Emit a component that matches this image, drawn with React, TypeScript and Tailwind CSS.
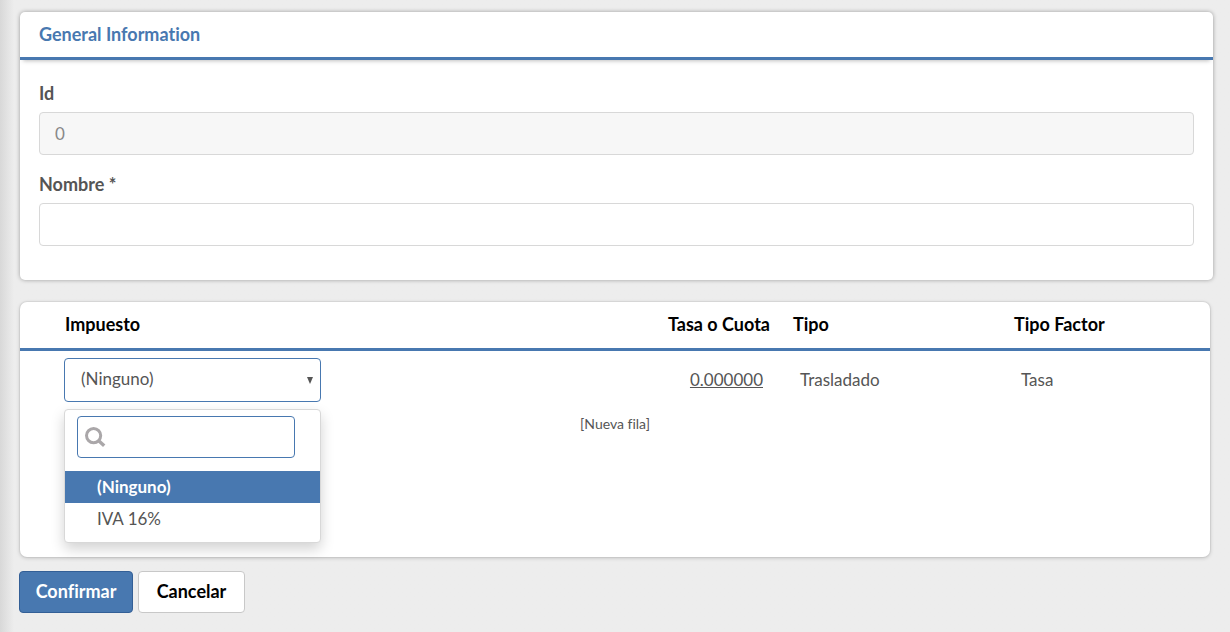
import { useState } from "react";

const options = ["(Ninguno)", "IVA 16%"];

function SearchIcon() {
  return (
    <svg
      viewBox="0 0 22 22"
      className="pointer-events-none absolute left-2 top-[10px] size-[22px]"
      fill="none"
      stroke="#aaa7a9"
      aria-hidden="true"
    >
      <circle cx="8.6" cy="9.6" r="7.1" strokeWidth="3" />
      <path d="M13.4 14.4l5.8 5.4" strokeWidth="3.4" />
    </svg>
  );
}

function GeneralInformation() {
  return (
    <section className="rounded-[5px] bg-white shadow-[0_0_4px_rgba(0,0,0,0.35)]">
      <h2 className="border-b-3 border-[#4878b0] px-[19px] pt-[10px] pb-[11px] text-lg leading-6 font-bold text-[#4878b0] shadow-[0_4px_4px_-3px_rgba(0,0,0,0.25)]">
        General Information
      </h2>
      <div className="flex flex-col gap-[17px] px-[19px] pt-[21px] pb-[34px]">
        <div className="flex flex-col gap-[7px]">
          <label htmlFor="id" className="text-lg leading-6 font-bold">
            Id
          </label>
          <input
            id="id"
            disabled
            defaultValue="0"
            className="h-[43px] w-full rounded-[4px] border border-[#d8d8d8] bg-[#f7f7f7] px-[15px] text-[17px] text-[#888]"
          />
        </div>
        <div className="flex flex-col gap-[7px]">
          <label htmlFor="nombre" className="text-lg leading-6 font-bold">
            Nombre *
          </label>
          <input
            id="nombre"
            className="h-[43px] w-full rounded-[4px] border border-[#d8d8d8] bg-white px-[15px] text-[17px] outline-none focus:border-[#4878b0]"
          />
        </div>
      </div>
    </section>
  );
}

function TaxPicker() {
  const [selected, setSelected] = useState(options[0]);
  const [query, setQuery] = useState("");
  const visible = options.filter((o) => o.toLowerCase().includes(query.toLowerCase()));

  return (
    <div className="relative w-[257px]">
      <select
        aria-label="Impuesto"
        value={selected}
        onChange={(e) => setSelected(e.target.value)}
        className="block h-11 w-full appearance-none rounded-[4px] border border-[#4878b0] bg-white px-4 pb-[2px] text-[17px] outline-none"
      >
        {options.map((o) => (
          <option key={o}>{o}</option>
        ))}
      </select>
      <svg
        viewBox="0 0 6 7"
        className="pointer-events-none absolute top-[19px] right-2 h-[7px] w-[6px]"
        fill="#555"
        aria-hidden="true"
      >
        <path d="M0 0h6L3 7z" />
      </svg>
      <div className="absolute top-full left-0 z-10 mt-[7px] w-full rounded-[4px] border border-[#d8d8d8] bg-white pt-[6px] pb-[7px] shadow-[0_6px_14px_rgba(0,0,0,0.18)]">
        <div className="relative mr-[25px] mb-[13px] ml-3">
          <input
            type="text"
            aria-label="Buscar impuesto"
            value={query}
            onChange={(e) => setQuery(e.target.value)}
            className="block h-[42px] w-full rounded-[4px] border border-[#4878b0] bg-white pr-3 pl-9 text-[17px] outline-none"
          />
          <SearchIcon />
        </div>
        <ul role="listbox" aria-label="Impuesto">
          {visible.map((o) => (
            <li
              key={o}
              role="option"
              aria-selected={o === selected}
              onClick={() => setSelected(o)}
              className="cursor-pointer px-8 text-[17px] leading-8 aria-selected:bg-[#4878b0] aria-selected:font-bold aria-selected:text-white"
            >
              {o}
            </li>
          ))}
        </ul>
      </div>
    </div>
  );
}

function TaxTable() {
  return (
    <section className="mr-[3px] min-h-[255px] rounded-[7px] bg-white shadow-[0_0_1px_1px_rgba(0,0,0,0.06),0_1px_4px_rgba(0,0,0,0.18)]">
      <table className="w-full table-fixed border-collapse text-[17px] leading-6">
        <colgroup>
          <col />
          <col className="w-[200px]" />
          <col className="w-[221px]" />
          <col className="w-[204px]" />
        </colgroup>
        <thead>
          <tr className="text-left text-lg leading-6 text-black">
            <th className="pt-[10px] pb-3 pl-[45px]">Impuesto</th>
            <th className="pt-[10px] pr-[15px] pb-3 text-right">Tasa o Cuota</th>
            <th className="pt-[10px] pb-3 pl-2">Tipo</th>
            <th className="pt-[10px] pb-3 pl-2">Tipo Factor</th>
          </tr>
          <tr aria-hidden="true">
            <td colSpan={4} className="h-[3px] bg-[#4878b0] p-0" />
          </tr>
        </thead>
        <tbody>
          <tr>
            <td className="pt-[7px] pl-11">
              <TaxPicker />
            </td>
            <td className="pt-[7px] pr-[22px] text-right underline">0.000000</td>
            <td className="pt-[7px] pl-[15px]">Trasladado</td>
            <td className="pt-[7px] pl-[15px]">Tasa</td>
          </tr>
          <tr>
            <td colSpan={4} className="pt-3 text-center text-sm leading-5">
              <button type="button" className="cursor-pointer">
                [Nueva fila]
              </button>
            </td>
          </tr>
        </tbody>
      </table>
    </section>
  );
}

export default function App() {
  return (
    <main className="min-h-screen bg-[#ededed] bg-linear-to-r from-[#d8d8d8] to-[#ededed] to-[14px] pt-3 pr-[17px] pb-5 pl-5 font-[Trebuchet_MS,Lato,sans-serif] text-[#555] [font-variant-ligatures:none]">
      <form onSubmit={(e) => e.preventDefault()}>
        <GeneralInformation />
        <div className="mt-[22px]">
          <TaxTable />
        </div>
        <div className="-ml-px mt-[14px] flex gap-[5px] text-lg leading-6 font-bold">
          <button
            type="submit"
            className="h-[42px] w-[114px] rounded-[4px] border border-[#335f96] bg-[#4878b0] pb-[2px] text-white"
          >
            Confirmar
          </button>
          <button
            type="button"
            className="h-[42px] w-[107px] rounded-[4px] border border-[#c8c8c8] bg-white pb-[2px] text-black"
          >
            Cancelar
          </button>
        </div>
      </form>
    </main>
  );
}
